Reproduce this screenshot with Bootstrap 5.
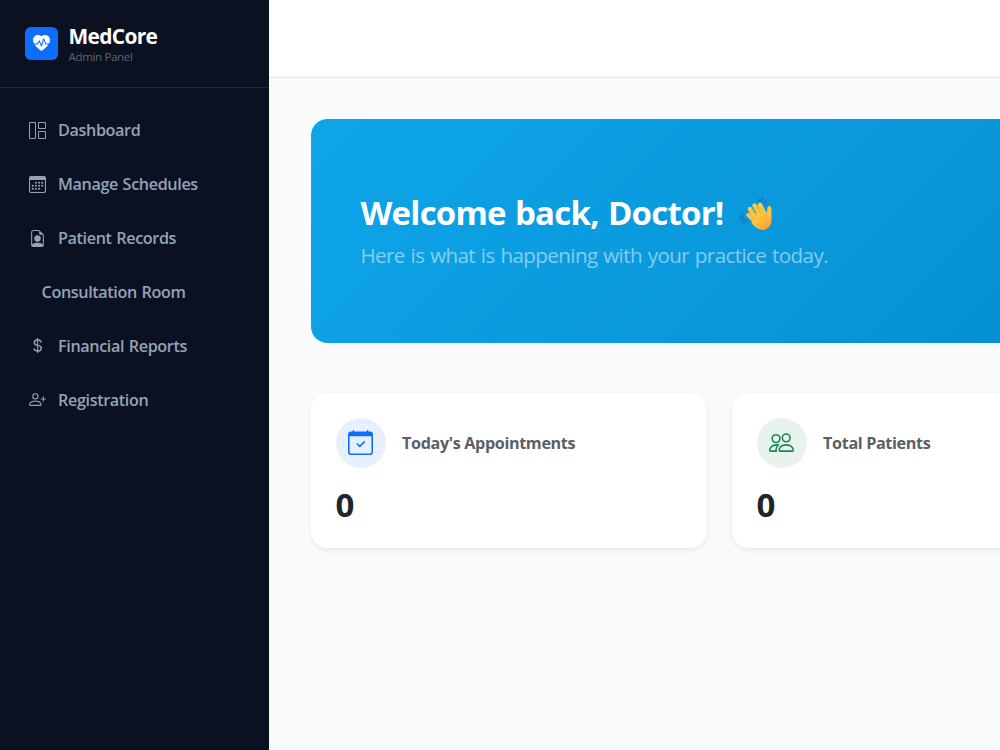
<!DOCTYPE html>
<html lang="en">
<head>
<meta charset="utf-8">
<meta name="viewport" content="width=device-width, initial-scale=1">
<title>MedCore Admin Panel</title>
<link href="https://cdn.jsdelivr.net/npm/bootstrap@5.3.0/dist/css/bootstrap.min.css" rel="stylesheet">
<style>
body { font-family: "Open Sans", "Noto Sans", sans-serif; background: #f8fafc; height: 750px; white-space: nowrap; }
svg { fill: currentColor; display: block; flex-shrink: 0; }
.sidebar { width: 269px; background: #0b1120; }
.brand { height: 88px; padding: 0 25px; border-bottom: 1px solid #1e293b; }
.brand-logo { width: 33px; height: 33px; border-radius: 6px; margin-right: 10.5px; }
.brand-name { font-size: 20.9px; line-height: 25px; letter-spacing: -.65px; }
.brand-sub { font-size: 11.6px; line-height: 15px; color: #5b6472; letter-spacing: -.38px; }
.side-nav { padding: 19.5px 16px; gap: 8.3px; }
.side-nav .nav-link { height: 45.6px; padding: 0 12.5px; color: #94a3b8; font-size: 16.2px; font-weight: 600; letter-spacing: -.38px; word-spacing: .8px; }
.side-nav svg { margin-right: 12.5px; }
.side-nav .no-icon { padding-left: 25.5px; }
.line-icon { fill: none; stroke: currentColor; }
.topbar { height: 78px; border-bottom: 1px solid #e2e8f0; }
.page-body { padding: 41.4px 0 0 41.5px; width: 1281px; }
.hero { height: 223.5px; border-radius: 16.6px; padding: 2px 50px 0; color: #fff; background: linear-gradient(135deg, #0ea5e9, #0284c7); margin-bottom: 50.1px; }
.hero h1 { font-size: 33px; line-height: 40px; letter-spacing: -.78px; word-spacing: 1.4px; }
.hero p { font-size: 20.6px; line-height: 31px; letter-spacing: -.6px; word-spacing: 1px; color: rgba(255,255,255,.5); margin-top: 7px; }
.wave { margin: 3px 0 0 15px; }
.stats { gap: 25px; }
.stat-card { width: 396px; height: 155.5px; border-radius: 16.6px; padding: 25px; box-shadow: 0 2px 4px rgba(0,0,0,.075); }
.stat-icon { width: 50px; height: 50px; margin-right: 16.6px; }
.tint-blue { background: #e7f0ff; }
.tint-green { background: #e8f3ee; }
.stat-label { font-size: 16.2px; color: #5b5f64; letter-spacing: -.38px; }
.stat-value { font-size: 33px; line-height: 40px; margin-top: 16.8px; }
</style>
</head>
<body class="d-flex overflow-hidden">
<aside class="sidebar flex-shrink-0 h-100">
  <div class="brand d-flex align-items-center">
    <div class="brand-logo bg-primary text-white d-flex align-items-center justify-content-center">
      <svg width="17" height="17" viewBox="0 0 16 16"><path d="M1.475 9C2.702 10.84 4.779 12.871 8 15c3.221-2.129 5.298-4.16 6.525-6H12a.5.5 0 0 1-.464-.314l-1.457-3.642-1.598 5.593a.5.5 0 0 1-.945.049L5.889 6.568l-1.473 2.21A.5.5 0 0 1 4 9H1.475Z"/><path d="M.88 8C-2.427 1.68 4.41-2 7.823 1.143c.06.055.119.112.176.171a3.12 3.12 0 0 1 .176-.17C11.59-2 18.426 1.68 15.12 8h-2.783l-1.874-4.686a.5.5 0 0 0-.945.049L7.921 8.956 6.464 5.314a.5.5 0 0 0-.88-.091L3.732 8H.88Z"/></svg>
    </div>
    <div>
      <div class="brand-name fw-bold text-white">MedCore</div>
      <div class="brand-sub">Admin Panel</div>
    </div>
  </div>
  <nav class="side-nav nav flex-column flex-nowrap">
    <a class="nav-link d-flex align-items-center" href="#"><svg class="line-icon" width="17" height="17" viewBox="0 0 17 17"><path d="M.5.5h6v16h-6zM9.500.5h7v6h-7zM9.500 9.500h7v7h-7z"/></svg><span>Dashboard</span></a>
    <a class="nav-link d-flex align-items-center" href="#"><svg width="17" height="17" viewBox="0 0 16 16"><path d="M14 0H2a2 2 0 0 0-2 2v12a2 2 0 0 0 2 2h12a2 2 0 0 0 2-2V2a2 2 0 0 0-2-2zM1 3.857h14v10.286c0 .473-.448.857-1 .857H2c-.552 0-1-.384-1-.857V3.857z"/><circle cx="6.500" cy="6.300" r="1"/><circle cx="9.500" cy="6.300" r="1"/><circle cx="12.500" cy="6.300" r="1"/><circle cx="3.500" cy="9.200" r="1"/><circle cx="6.500" cy="9.200" r="1"/><circle cx="9.500" cy="9.200" r="1"/><circle cx="12.500" cy="9.200" r="1"/><circle cx="3.500" cy="12" r="1"/><circle cx="6.500" cy="12" r="1"/><circle cx="9.500" cy="12" r="1"/></svg><span>Manage Schedules</span></a>
    <a class="nav-link d-flex align-items-center" href="#"><svg width="17" height="17" viewBox="0 0 16 16"><path d="M11 8a3 3 0 1 1-6 0 3 3 0 0 1 6 0z"/><path d="M14 14V4.500L9.500 0H4a2 2 0 0 0-2 2v12a2 2 0 0 0 2 2h8a2 2 0 0 0 2-2zM9.500 3A1.500 1.500 0 0 0 11 4.500h2v9.255S12 12 8 12s-5 1.755-5 1.755V2a1 1 0 0 1 1-1h5.500v2z"/></svg><span>Patient Records</span></a>
    <a class="nav-link no-icon d-flex align-items-center" href="#"><span>Consultation Room</span></a>
    <a class="nav-link d-flex align-items-center" href="#"><svg width="17" height="17" viewBox="0 0 16 16"><path d="M4 10.781c.148 1.667 1.513 2.850 3.591 3.003V15h1.043v-1.216c2.270-.179 3.678-1.438 3.678-3.300 0-1.590-.947-2.510-2.956-3.028l-.722-.187V3.467c1.122.110 1.879.714 2.070 1.616h1.470c-.166-1.600-1.540-2.748-3.540-2.875V1H7.591v1.233c-1.939.230-3.270 1.472-3.270 3.156 0 1.454.966 2.483 2.661 2.917l.610.162v4.031c-1.149-.170-1.940-.800-2.131-1.718H4zm3.391-3.836c-1.043-.263-1.600-.825-1.600-1.616 0-.944.704-1.641 1.800-1.828v3.495l-.200-.050zm1.591 1.872c1.287.323 1.852.859 1.852 1.769 0 1.097-.826 1.828-2.200 1.939V8.730l.348.086z"/></svg><span>Financial Reports</span></a>
    <a class="nav-link d-flex align-items-center" href="#"><svg width="17" height="17" viewBox="0 0 16 16"><path d="M6 8a3 3 0 1 0 0-6 3 3 0 0 0 0 6zm2-3a2 2 0 1 1-4 0 2 2 0 0 1 4 0zm4 8c0 1-1 1-1 1H1s-1 0-1-1 1-4 6-4 6 3 6 4zm-1-.004c-.001-.246-.154-.986-.832-1.664C9.516 10.680 8.289 10 6 10c-2.290 0-3.516.680-4.168 1.332-.678.678-.830 1.418-.832 1.664h10z"/><path d="M13.500 5a.5.5 0 0 1 .5.5V7h1.500a.5.5 0 0 1 0 1H14v1.500a.5.5 0 0 1-1 0V8h-1.500a.5.5 0 0 1 0-1H13V5.500a.5.5 0 0 1 .5-.5z"/></svg><span>Registration</span></a>
  </nav>
</aside>
<div class="flex-shrink-0">
  <header class="topbar bg-white"></header>
  <main class="page-body">
    <section class="hero d-flex flex-column justify-content-center">
      <h1 class="fw-bold d-flex align-items-center mb-0"><span>Welcome back, Doctor!</span>
        <svg class="wave" width="35" height="35" viewBox="0 0 35 35" role="img" aria-label="Waving hand">
          <defs><linearGradient id="skin" gradientUnits="userSpaceOnUse" x1="10" y1="4" x2="30" y2="33"><stop offset="0" stop-color="#ffce4a"/><stop offset=".6" stop-color="#ffc13b"/><stop offset="1" stop-color="#f59a35"/></linearGradient></defs>
          <g fill="none" stroke="#2463a2" stroke-width="1" stroke-linecap="round"><path d="M19 3q5 .5 7 5M22 1q4.500 1.500 6 5M3 17q.5 5 5 7M.8 19.500q1 4.500 5 6.500"/></g>
          <g stroke="url(#skin)" stroke-width="4.400" stroke-linecap="round" fill="none"><path d="M9.500 18l7 7M11 12l8 11M15.500 8.500l7 11M21 8l5 10"/></g>
          <path fill="url(#skin)" d="M14 18l11-6 2.800 4c.6-3 .2-6.500 2.200-7 2.300-.4 2.700 2.500 2.500 6.500-.2 4 .8 7.500-.7 11.500-1.500 4-5.300 6.800-9.800 5.800-4-.8-7-3.500-9.500-7z"/>
          <path d="M13 13l4.500 6M17.500 10.500l4.500 6M12.500 19.500l3 3M28 16q-3 2-2.500 5" fill="none" stroke="#e99b2d" stroke-width=".8"/>
        </svg>
      </h1>
      <p class="mb-0">Here is what is happening with your practice today.</p>
    </section>
    <section class="stats d-flex">
      <div class="stat-card bg-white">
        <div class="d-flex align-items-center">
          <div class="stat-icon tint-blue text-primary rounded-circle d-flex align-items-center justify-content-center">
            <svg width="25" height="25" viewBox="0 0 16 16"><path d="M10.854 7.146a.5.5 0 0 1 0 .708l-3 3a.5.5 0 0 1-.708 0l-1.500-1.500a.5.5 0 1 1 .708-.708L7.500 9.793l2.646-2.647a.5.5 0 0 1 .708 0z"/><path d="M3.500 0a.5.5 0 0 1 .5.5V1h8V.5a.5.5 0 0 1 1 0V1h1a2 2 0 0 1 2 2v11a2 2 0 0 1-2 2H2a2 2 0 0 1-2-2V3a2 2 0 0 1 2-2h1V.5a.5.5 0 0 1 .5-.5zM1 4v10a1 1 0 0 0 1 1h12a1 1 0 0 0 1-1V4H1z"/></svg>
          </div>
          <span class="stat-label fw-bold">Today's Appointments</span>
        </div>
        <div class="stat-value fw-bold">0</div>
      </div>
      <div class="stat-card bg-white">
        <div class="d-flex align-items-center">
          <div class="stat-icon tint-green text-success rounded-circle d-flex align-items-center justify-content-center">
            <svg width="25" height="25" viewBox="0 0 16 16"><path d="M15 14s1 0 1-1-1-4-5-4-5 3-5 4 1 1 1 1h8zm-7.978-1A.261.261 0 0 1 7 12.996c.001-.264.167-1.030.760-1.720C8.312 10.629 9.282 10 11 10c1.717 0 2.687.630 3.240 1.276.593.690.758 1.457.760 1.720l-.008.002a.274.274 0 0 1-.014.002H7.022zM11 7a2 2 0 1 0 0-4 2 2 0 0 0 0 4zm3-2a3 3 0 1 1-6 0 3 3 0 0 1 6 0zM6.936 9.280a5.880 5.880 0 0 0-1.230-.247A7.350 7.350 0 0 0 5 9c-4 0-5 3-5 4 0 .667.333 1 1 1h4.216A2.238 2.238 0 0 1 5 13c0-1.010.377-2.042 1.090-2.904.243-.294.526-.569.846-.816zM4.920 10A5.493 5.493 0 0 0 4 13H1c0-.260.164-1.030.760-1.724.545-.636 1.492-1.256 3.160-1.275zM1.500 5.500a3 3 0 1 1 6 0 3 3 0 0 1-6 0zm3-2a2 2 0 1 0 0 4 2 2 0 0 0 0-4z"/></svg>
          </div>
          <span class="stat-label fw-bold">Total Patients</span>
        </div>
        <div class="stat-value fw-bold">0</div>
      </div>
    </section>
  </main>
</div>
<script src="https://cdn.jsdelivr.net/npm/bootstrap@5.3.0/dist/js/bootstrap.bundle.min.js"></script>
</body>
</html>
